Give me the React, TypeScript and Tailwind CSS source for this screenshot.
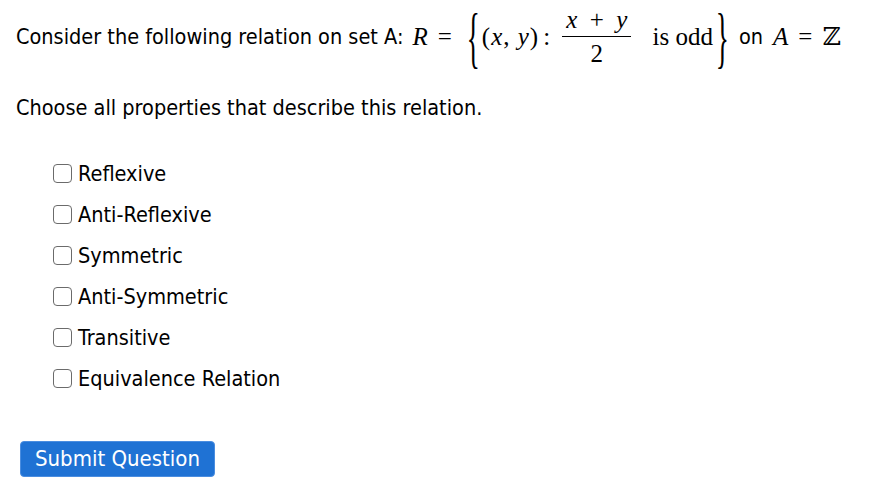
import { useState } from "react";

const options = [
  "Reflexive",
  "Anti-Reflexive",
  "Symmetric",
  "Anti-Symmetric",
  "Transitive",
  "Equivalence Relation",
];

const serif = { fontFamily: "'Liberation Serif', 'DejaVu Serif', serif" };

function Brace({ ch, className = "" }: { ch: string; className?: string }) {
  return (
    <span className={"inline-flex items-center justify-center w-[14px] h-[74px] " + className}>
      <span className="inline-block text-[68px] leading-[74px] scale-x-[0.4]">{ch}</span>
    </span>
  );
}

function MathRelation() {
  return (
    <span className="inline-flex items-center text-[25px] text-black" style={serif}>
      <span className="italic ml-[9px]">R</span>
      <span className="ml-[10px] mr-[12px]">=</span>
      <Brace ch="{" className="ml-[2px]" />
      <span className="ml-[2px] tracking-[1px]">
        (<span className="italic">x</span>, <span className="italic">y</span>)
      </span>
      <span className="ml-[4px]">:</span>
      <span className="inline-flex flex-col items-center ml-[12px] leading-none -mt-[2px]">
        <span className="px-[4px] pb-[4px] whitespace-pre">
          <span className="italic">x</span>{"  +  "}<span className="italic">y</span>
        </span>
        <span className="w-full border-t border-black" />
        <span className="pt-[4px]">2</span>
      </span>
      <span className="ml-[21px]">is odd</span>
      <Brace ch="}" className="ml-[2px]" />
    </span>
  );
}

export default function App() {
  const [checked, setChecked] = useState<boolean[]>(options.map(() => false));

  return (
    <div
      className="min-h-screen bg-white text-black px-[16px] pt-[0px]"
      style={{ fontFamily: "'DejaVu Sans Condensed', 'DejaVu Sans', sans-serif" }}
    >
      <div className="flex items-center text-[21.5px]">
        <span>Consider the following relation on set A:</span>
        <MathRelation />
        <span className="ml-[10px]">on</span>
        <span className="text-[25px] ml-[10px]" style={serif}>
          <span className="italic">A</span>
          <span className="mx-[10px]">=</span>
          <span>ℤ</span>
        </span>
      </div>

      <p className="text-[21.5px] mt-[18px]">Choose all properties that describe this relation.</p>

      <div className="mt-[37px] ml-[37px] flex flex-col gap-[16px]">
        {options.map((opt, i) => (
          <label key={opt} className="flex items-center gap-[6px] text-[21.5px] leading-[25px]">
            <input
              type="checkbox"
              checked={checked[i]}
              onChange={() => setChecked(checked.map((c, j) => (j === i ? !c : c)))}
              className="appearance-none w-[19px] h-[19px] m-0 rounded-[4px] border border-[#6b6b6b] bg-white checked:bg-[#1f72d4] checked:border-[#1f72d4]"
            />
            <span>{opt}</span>
          </label>
        ))}
      </div>

      <button className="mt-[50px] ml-[4px] w-[195px] h-[36px] rounded-[4px] border border-[#4a8de0] bg-[#1f72d4] text-white text-[22px] leading-none">
        Submit Question
      </button>
    </div>
  );
}
